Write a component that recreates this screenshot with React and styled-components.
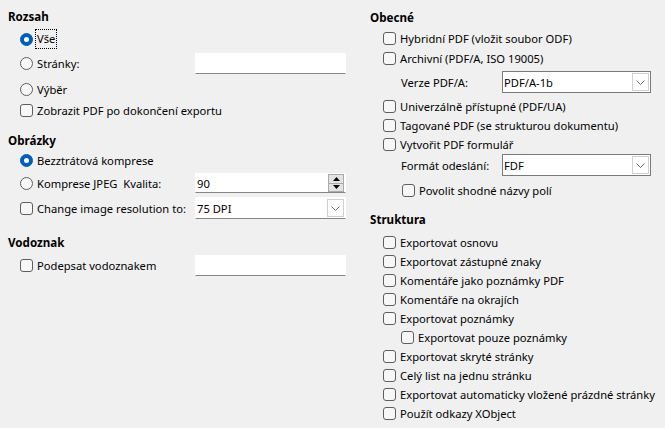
import styled, { createGlobalStyle } from 'styled-components';

const GlobalStyle = createGlobalStyle`
  * {
    box-sizing: border-box;
  }

  body {
    margin: 0;
    background: #f0f0f0;
    color: #000;
    font-family: "Noto Sans", "Open Sans", sans-serif;
    font-size: 11.2px;
  }
`;

const Page = styled.div`
  width: 665px;
  height: 428px;
  padding-left: 8px;
  display: flex;
  gap: 24px;
  overflow: hidden;
`;

const Column = styled.div`
  width: ${(p) => p.$w}px;
  display: flex;
  flex-direction: column;
`;

const Heading = styled.div`
  height: 20px;
  margin-top: ${(p) => p.$mt || 0}px;
  display: flex;
  align-items: center;
  font-weight: 700;
  font-size: 11.6px;
`;

const Row = styled.div`
  height: ${(p) => p.$h || 19}px;
  margin-top: ${(p) => p.$mt || 0}px;
  padding-left: ${(p) => p.$indent || 0}px;
  display: flex;
  align-items: center;
  white-space: nowrap;
`;

const Option = styled.label`
  width: ${(p) => (p.$w ? `${p.$w}px` : 'auto')};
  flex-shrink: 0;
  display: flex;
  align-items: center;
  gap: 4px;
`;

const Label = styled.span`
  width: ${(p) => p.$w}px;
  flex-shrink: 0;
`;

const Focused = styled.span`
  outline: 1px dotted #000;
  outline-offset: 0;
  padding: 1px 1px 2px;
  margin-left: -1px;
`;

const Radio = styled.span`
  width: 13px;
  height: 13px;
  border-radius: 50%;
  flex-shrink: 0;
  background: ${(p) => (p.$on ? '#005fb8' : '#f7f7f7')};
  border: 1px solid ${(p) => (p.$on ? '#005fb8' : '#5e5e5e')};
  display: flex;
  align-items: center;
  justify-content: center;

  &::after {
    content: '';
    display: ${(p) => (p.$on ? 'block' : 'none')};
    width: 5px;
    height: 5px;
    border-radius: 50%;
    background: #fff;
  }
`;

const Check = styled.span`
  width: 13px;
  height: 13px;
  flex-shrink: 0;
  border: 1px solid #5e5e5e;
  border-radius: 3px;
  background: #f7f7f7;
`;

const Field = styled.div`
  width: ${(p) => p.$w}px;
  height: ${(p) => p.$h || 21}px;
  background: #fff;
  border: 1px solid ${(p) => (p.$framed ? '#7a7a7a' : '#fff')};
  border-bottom-color: ${(p) => (p.$framed ? '#7a7a7a' : '#868686')};
  padding-left: 1px;
  display: flex;
  align-items: center;
  justify-content: space-between;
`;

const SpinButtons = styled.div`
  width: 16px;
  height: 18px;
  margin-right: 1px;
  display: flex;
  flex-direction: column;
  gap: 0;
`;

const SpinButton = styled.span`
  flex: 1;
  background: #e3e3e3;
  border: 1px solid #a9a9a9;
  border-top-width: ${(p) => (p.$down ? 0 : 1)}px;
  display: flex;
  align-items: center;
  justify-content: center;
`;

const DropButton = styled.span`
  width: 17px;
  height: calc(100% - 2px);
  margin-right: 1px;
  background: #fff;
  border: 1px solid #d0d0d0;
  display: flex;
  align-items: center;
  justify-content: center;
`;

function Arrow({ up }) {
  return (
    <svg width="7" height="4" viewBox="0 0 7 4">
      <path d={up ? 'M0 4 L3.5 0 L7 4 Z' : 'M0 0 L3.5 4 L7 0 Z'} fill="#000" />
    </svg>
  );
}

function Chevron() {
  return (
    <svg width="9" height="5" viewBox="0 0 9 5">
      <path d="M0.5 0.5 L4.5 4.5 L8.5 0.5" fill="none" stroke="#6b6b6b" strokeWidth="1" />
    </svg>
  );
}

function TextInput({ w, value }) {
  return (
    <Field $w={w}>
      <span>{value}</span>
    </Field>
  );
}

function Spin({ w, value }) {
  return (
    <Field $w={w} $h={20}>
      <span>{value}</span>
      <SpinButtons>
        <SpinButton><Arrow up /></SpinButton>
        <SpinButton $down><Arrow /></SpinButton>
      </SpinButtons>
    </Field>
  );
}

function Select({ w, value, framed }) {
  return (
    <Field $w={w} $h={22} $framed={framed}>
      <span>{value}</span>
      <DropButton><Chevron /></DropButton>
    </Field>
  );
}

function CheckRow({ label, mt, indent = 13 }) {
  return (
    <Row $mt={mt} $indent={indent}>
      <Option>
        <Check />
        {label}
      </Option>
    </Row>
  );
}

const structure = [
  { label: 'Exportovat osnovu' },
  { label: 'Exportovat zástupné znaky' },
  { label: 'Komentáře jako poznámky PDF' },
  { label: 'Komentáře na okrajích' },
  { label: 'Exportovat poznámky' },
  { label: 'Exportovat pouze poznámky', indent: 31 },
  { label: 'Exportovat skryté stránky' },
  { label: 'Celý list na jednu stránku' },
  { label: 'Exportovat automaticky vložené prázdné stránky' },
  { label: 'Použít odkazy XObject' },
];

export default function App() {
  return (
    <>
      <GlobalStyle />
      <Page>
        <Column $w={338}>
          <Heading $mt={6}>Rozsah</Heading>
          <Row $h={20} $mt={3} $indent={12}>
            <Option>
              <Radio $on />
              <Focused>Vše</Focused>
            </Option>
          </Row>
          <Row $h={21} $mt={4} $indent={12}>
            <Option $w={175}>
              <Radio />
              Stránky:
            </Option>
            <TextInput w={151} />
          </Row>
          <Row $h={20} $mt={5} $indent={12}>
            <Option>
              <Radio />
              Výběr
            </Option>
          </Row>
          <Row $h={20} $mt={1} $indent={12}>
            <Option>
              <Check />
              Zobrazit PDF po dokončení exportu
            </Option>
          </Row>

          <Heading $mt={10}>Obrázky</Heading>
          <Row $h={20} $indent={12}>
            <Option>
              <Radio $on />
              Bezztrátová komprese
            </Option>
          </Row>
          <Row $h={20} $mt={3} $indent={12}>
            <Option $w={175}>
              <Radio />
              Komprese JPEG&nbsp;&nbsp;Kvalita:
            </Option>
            <Spin w={151} value="90" />
          </Row>
          <Row $h={22} $mt={4} $indent={12}>
            <Option $w={175}>
              <Check />
              Change image resolution to:
            </Option>
            <Select w={151} value="75 DPI" />
          </Row>

          <Heading $mt={13}>Vodoznak</Heading>
          <Row $h={21} $mt={3} $indent={12}>
            <Option $w={175}>
              <Check />
              Podepsat vodoznakem
            </Option>
            <TextInput w={151} />
          </Row>
        </Column>

        <Column $w={295}>
          <Heading $mt={7}>Obecné</Heading>
          <CheckRow label="Hybridní PDF (vložit soubor ODF)" mt={2} />
          <CheckRow label="Archivní (PDF/A, ISO 19005)" mt={1} />
          <Row $h={22} $mt={3} $indent={31}>
            <Label $w={101}>Verze PDF/A:</Label>
            <Select w={149} value="PDF/A-1b" framed />
          </Row>
          <CheckRow label="Univerzálně přístupné (PDF/UA)" mt={4} />
          <CheckRow label="Tagované PDF (se strukturou dokumentu)" />
          <CheckRow label="Vytvořit PDF formulář" />
          <Row $h={22} $indent={31}>
            <Label $w={101}>Formát odeslání:</Label>
            <Select w={149} value="FDF" framed />
          </Row>
          <CheckRow label="Povolit shodné názvy polí" mt={5} indent={32} />

          <Heading $mt={9}>Struktura</Heading>
          {structure.map((item, i) => (
            <CheckRow
              key={item.label}
              label={item.label}
              mt={i === 0 ? 4 : 0}
              indent={item.indent}
            />
          ))}
        </Column>
      </Page>
    </>
  );
}
